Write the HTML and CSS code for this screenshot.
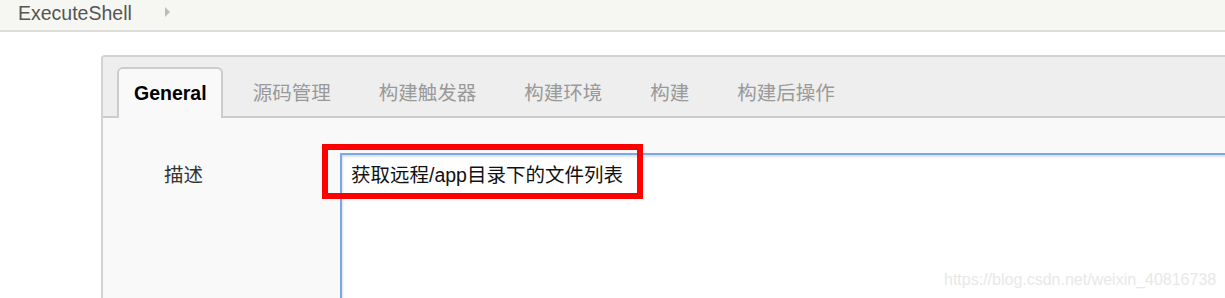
FILE: index.html
```html
<!DOCTYPE html>
<html lang="zh-CN">
<head>
<meta charset="utf-8">
<title>ExecuteShell</title>
<link rel="stylesheet" href="styles.css">
</head>
<body>
<div class="topbar">
  <span class="crumb">ExecuteShell</span>
  <span class="arrow"></span>
</div>
<div class="panel">
  <div class="tabs">
    <div class="tab active">General</div>
    <div class="tab">源码管理</div>
    <div class="tab">构建触发器</div>
    <div class="tab">构建环境</div>
    <div class="tab">构建</div>
    <div class="tab">构建后操作</div>
  </div>
  <div class="content">
    <div class="label">描述</div>
    <div class="field">
      <div class="textarea">获取远程/app目录下的文件列表</div>
      <div class="highlight"></div>
    </div>
  </div>
</div>
<div class="watermark">https://blog.csdn.net/weixin_40816738</div>
</body>
</html>
```
FILE: styles.css
```css
html, body {
  margin: 0;
  padding: 0;
  width: 1225px;
  height: 298px;
  overflow: hidden;
  background: #fff;
  font-family: "Liberation Sans", "Noto Sans CJK SC", sans-serif;
  font-size: 19.5px;
  color: #333;
}

.topbar {
  height: 30px;
  background: #f6f7f2;
  border-bottom: 2px solid #dcdcd8;
  display: flex;
  align-items: center;
  padding-left: 18px;
}

.crumb {
  color: #555;
  line-height: 24px;
  margin-top: -4px;
}

.arrow {
  width: 0;
  height: 0;
  border-top: 5px solid transparent;
  border-bottom: 5px solid transparent;
  border-left: 5px solid #bbb;
  margin-left: 33px;
  margin-top: -6px;
}

.panel {
  margin-top: 23px;
  margin-left: 101px;
  width: 1124px;
  height: 243px;
  box-sizing: border-box;
  border: 2px solid #d2d2d2;
  border-right: none;
  border-bottom: none;
  border-radius: 4px 0 0 0;
  background: #f9f9f9;
  overflow: hidden;
}

.tabs {
  display: flex;
  gap: 16px;
  background: #eeeeee;
  padding: 10px 0 0 14px;
  border-bottom: 2px solid #cccccc;
  height: 49px;
}

.tab {
  padding: 0 14px;
  border: 2px solid transparent;
  border-bottom: none;
  color: #999;
  height: 49px;
  line-height: 48px;
  box-sizing: border-box;
  white-space: nowrap;
}

.tab.active {
  background: #f9f9f9;
  border-color: #cccccc;
  border-radius: 6px 6px 0 0;
  padding: 0 14px 0 15px;
  margin-right: -2px;
  color: #000;
  font-weight: bold;
  height: 51px;
  margin-bottom: -2px;
}

.content {
  display: flex;
  padding-top: 35px;
}

.label {
  width: 176px;
  padding-left: 61px;
  padding-top: 11px;
  line-height: 22px;
  color: #333;
}

.field {
  position: relative;
  flex: 1;
}

.textarea {
  background: #fff;
  border: 2px solid #7ba7ec;
  border-right: none;
  border-bottom: none;
  box-shadow: inset 1px 2px 2px rgba(0, 0, 0, 0.12);
  padding: 9px 9px;
  height: 140px;
  line-height: 22px;
  color: #111;
}

.highlight {
  position: absolute;
  left: -18px;
  top: -9px;
  width: 321px;
  height: 55px;
  border: 6px solid #ff0000;
  box-sizing: border-box;
}

.watermark {
  position: absolute;
  left: 944px;
  top: 270px;
  font-size: 16px;
  line-height: 20px;
  color: #e8e8e8;
  white-space: nowrap;
}
```
